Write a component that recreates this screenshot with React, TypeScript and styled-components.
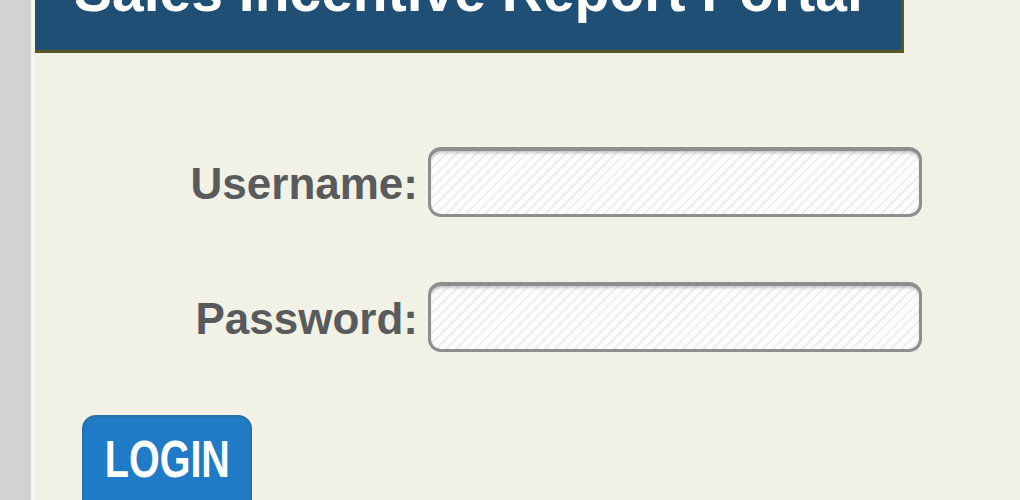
import styled, { createGlobalStyle } from "styled-components";

const GlobalStyle = createGlobalStyle`
  html, body {
    margin: 0;
    padding: 0;
    background: #d2d2d2;
    overflow: hidden;
  }
  body {
    font-family: "Liberation Sans", Arial, sans-serif;
  }
`;

const Page = styled.div`
  margin-left: 31px;
  min-height: 500px;
  border-left: 4px solid #f7f7f1;
  background-color: #f2f1e6;
  display: flex;
  flex-direction: column;
  align-items: flex-start;
`;

const Header = styled.div`
  width: 866px;
  height: 50px;
  background-color: #1f4f75;
  border-right: 3px solid #5a581f;
  border-bottom: 3px solid #5a581f;
  overflow: hidden;
`;

const Title = styled.h1`
  margin: -37px 0 0 39px;
  font-size: 57px;
  line-height: 56px;
  font-weight: bold;
  color: #ffffff;
  white-space: nowrap;
`;

const Form = styled.div`
  margin-top: 94px;
  display: grid;
  grid-template-columns: 383px 494px;
  column-gap: 10px;
  row-gap: 65px;
  align-items: center;
`;

const Label = styled.label`
  text-align: right;
  font-size: 44px;
  font-weight: bold;
  color: #585a5c;
  padding-top: 4px;
`;

const Input = styled.input`
  box-sizing: border-box;
  width: 494px;
  height: 70px;
  border: 3px solid #8e8e8e;
  border-top-width: 4px;
  border-radius: 13px;
  box-shadow: inset 0 3px 3px -1px rgba(0, 0, 0, 0.2);
  background-color: #fcfcfc;
  background-image: repeating-linear-gradient(
    135deg,
    #fcfcfc 0px,
    #fcfcfc 5px,
    #eeeeee 5px,
    #eeeeee 7px
  );
  outline: none;
  font-size: 30px;
  padding: 0 12px;
`;

const Button = styled.button`
  margin: 63px 0 0 47px;
  width: 170px;
  height: 100px;
  align-self: flex-start;
  background-color: #1f7bc6;
  border: 2px solid #2a6ea6;
  border-radius: 14px;
  display: flex;
  justify-content: center;
  align-items: flex-start;
  padding: 16px 0 0;
  cursor: pointer;
`;

const ButtonText = styled.span`
  display: inline-block;
  font-family: "Liberation Sans", Arial, sans-serif;
  font-size: 52px;
  line-height: 52px;
  font-weight: bold;
  color: #ffffff;
  transform: scaleX(0.76);
`;

export default function App() {
  return (
    <>
      <GlobalStyle />
      <Page>
        <Header>
          <Title>Sales Incentive Report Portal</Title>
        </Header>
        <Form>
          <Label htmlFor="username">Username:</Label>
          <Input id="username" type="text" />
          <Label htmlFor="password">Password:</Label>
          <Input id="password" type="password" />
        </Form>
        <Button type="button">
          <ButtonText>LOGIN</ButtonText>
        </Button>
      </Page>
    </>
  );
}
